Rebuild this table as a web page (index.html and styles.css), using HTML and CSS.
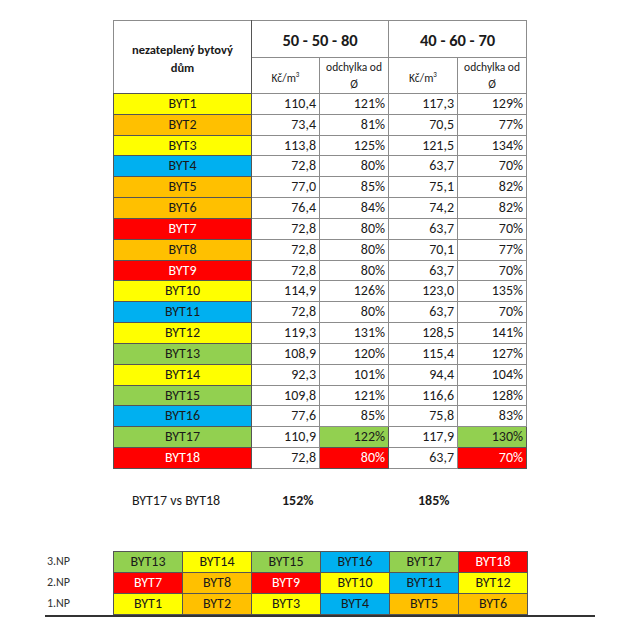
FILE: index.html
```html
<!DOCTYPE html>
<html lang="cs">
<head>
<meta charset="utf-8">
<link rel="stylesheet" href="styles.css">
</head>
<body>
<div class="page">
  <table class="main">
    <colgroup><col class="c1"><col class="c2"><col class="c3"><col class="c4"><col class="c5"></colgroup>
    <thead>
      <tr class="h1">
        <th rowspan="2" class="title">nezateplený bytový<br>dům</th>
        <th colspan="2" class="var">50 - 50 - 80</th>
        <th colspan="2" class="var">40 - 60 - 70</th>
      </tr>
      <tr class="h2">
        <th class="unit">Kč/m<sup>3</sup></th>
        <th class="dev">odchylka od<br>Ø</th>
        <th class="unit">Kč/m<sup>3</sup></th>
        <th class="dev">odchylka od<br>Ø</th>
      </tr>
    </thead>
    <tbody>
      <tr><td class="n y">BYT1</td><td>110,4</td><td>121%</td><td>117,3</td><td>129%</td></tr>
      <tr><td class="n o">BYT2</td><td>73,4</td><td>81%</td><td>70,5</td><td>77%</td></tr>
      <tr><td class="n y">BYT3</td><td>113,8</td><td>125%</td><td>121,5</td><td>134%</td></tr>
      <tr><td class="n b">BYT4</td><td>72,8</td><td>80%</td><td>63,7</td><td>70%</td></tr>
      <tr><td class="n o">BYT5</td><td>77,0</td><td>85%</td><td>75,1</td><td>82%</td></tr>
      <tr><td class="n o">BYT6</td><td>76,4</td><td>84%</td><td>74,2</td><td>82%</td></tr>
      <tr><td class="n r">BYT7</td><td>72,8</td><td>80%</td><td>63,7</td><td>70%</td></tr>
      <tr><td class="n o">BYT8</td><td>72,8</td><td>80%</td><td>70,1</td><td>77%</td></tr>
      <tr><td class="n r">BYT9</td><td>72,8</td><td>80%</td><td>63,7</td><td>70%</td></tr>
      <tr><td class="n y">BYT10</td><td>114,9</td><td>126%</td><td>123,0</td><td>135%</td></tr>
      <tr><td class="n b">BYT11</td><td>72,8</td><td>80%</td><td>63,7</td><td>70%</td></tr>
      <tr><td class="n y">BYT12</td><td>119,3</td><td>131%</td><td>128,5</td><td>141%</td></tr>
      <tr><td class="n g">BYT13</td><td>108,9</td><td>120%</td><td>115,4</td><td>127%</td></tr>
      <tr><td class="n y">BYT14</td><td>92,3</td><td>101%</td><td>94,4</td><td>104%</td></tr>
      <tr><td class="n g">BYT15</td><td>109,8</td><td>121%</td><td>116,6</td><td>128%</td></tr>
      <tr><td class="n b">BYT16</td><td>77,6</td><td>85%</td><td>75,8</td><td>83%</td></tr>
      <tr><td class="n g">BYT17</td><td>110,9</td><td class="g">122%</td><td>117,9</td><td class="g">130%</td></tr>
      <tr><td class="n r">BYT18</td><td>72,8</td><td class="r">80%</td><td>63,7</td><td class="r">70%</td></tr>
    </tbody>
  </table>

  <div class="compare">
    <span class="cmp-label">BYT17 vs BYT18</span>
    <span class="cmp-a">152%</span>
    <span class="cmp-b">185%</span>
  </div>

  <div class="floors">
    <div class="labels">
      <div>3.NP</div>
      <div>2.NP</div>
      <div>1.NP</div>
    </div>
    <div class="grid">
      <div class="g">BYT13</div><div class="y">BYT14</div><div class="g">BYT15</div><div class="b">BYT16</div><div class="g">BYT17</div><div class="r">BYT18</div>
      <div class="r">BYT7</div><div class="o">BYT8</div><div class="r">BYT9</div><div class="y">BYT10</div><div class="b">BYT11</div><div class="y">BYT12</div>
      <div class="y">BYT1</div><div class="o">BYT2</div><div class="y">BYT3</div><div class="b">BYT4</div><div class="o">BYT5</div><div class="o">BYT6</div>
    </div>
  </div>
</div>
</body>
</html>
```

FILE: styles.css
```css
html, body {
  margin: 0;
  padding: 0;
  background: #fff;
}
body {
  font-family: Carlito, Lato, "Liberation Sans", sans-serif;
  color: #1a1a1a;
  width: 640px;
  height: 640px;
  overflow: hidden;
}
.page {
  padding-top: 20px;
}
.main {
  margin-left: 113px;
  border-collapse: collapse;
  table-layout: fixed;
  width: 414px;
  border: 1px solid #555;
}
.c1 { width: 138px; }
.c2 { width: 68px; }
.c3 { width: 69px; }
.c4 { width: 69px; }
.c5 { width: 69px; }
.main th, .main td {
  border: 1px solid #8c8c8c;
  padding: 0 3px;
}
.main th {
  font-weight: normal;
}
.h1 { height: 37px; }
.h2 { height: 35px; }
.title {
  font-weight: bold !important;
  font-size: 12.5px;
  line-height: 18px;
  vertical-align: middle;
  padding-top: 4px !important;
  border-right-color: #555 !important;
  border-bottom-color: #555 !important;
}
.var {
  font-weight: bold !important;
  font-size: 16.5px;
  padding-top: 2px !important;
}
.unit {
  font-size: 11.5px;
  vertical-align: middle;
  padding-top: 4px !important;
}
.unit sup {
  font-size: 7px;
  vertical-align: 5px;
}
.dev {
  font-size: 11.5px;
  line-height: 17px;
  vertical-align: top;
  padding-top: 1px !important;
}
.main tbody tr {
  height: 20.83px;
}
.main td {
  font-size: 14px;
  text-align: right;
  line-height: 18px;
  white-space: nowrap;
}
.main td.n {
  text-align: center;
  border-color: #555;
}
.main td.g, .main td.r { border-color: #555; }

.y { background: #ffff00; }
.o { background: #ffc000; }
.b { background: #00b0f0; }
.g { background: #92d050; }
.r { background: #ff0000; color: #fff; }

.compare {
  display: flex;
  align-items: center;
  height: 20px;
  margin-top: 22px;
  font-size: 14px;
}
.cmp-label {
  margin-left: 132px;
  width: 150px;
}
.cmp-a {
  font-weight: bold;
  width: 136px;
}
.cmp-b {
  font-weight: bold;
}

.floors {
  display: flex;
  margin-top: 40px;
  margin-left: 45px;
  width: 550px;
  border-bottom: 2px solid #333;
}
.labels {
  width: 68px;
  display: flex;
  flex-direction: column;
  justify-content: flex-start;
  font-size: 12px;
  color: #333;
}
.labels div {
  height: 21px;
  line-height: 21px;
  padding-left: 2px;
}
.grid {
  display: grid;
  grid-template-columns: repeat(6, 69px);
  grid-auto-rows: 21px;
  border-top: 1px solid #555;
  border-left: 1px solid #555;
}
.grid div {
  border-right: 1px solid #555;
  border-bottom: 1px solid #555;
  text-align: center;
  font-size: 14px;
  line-height: 20px;
}
```
